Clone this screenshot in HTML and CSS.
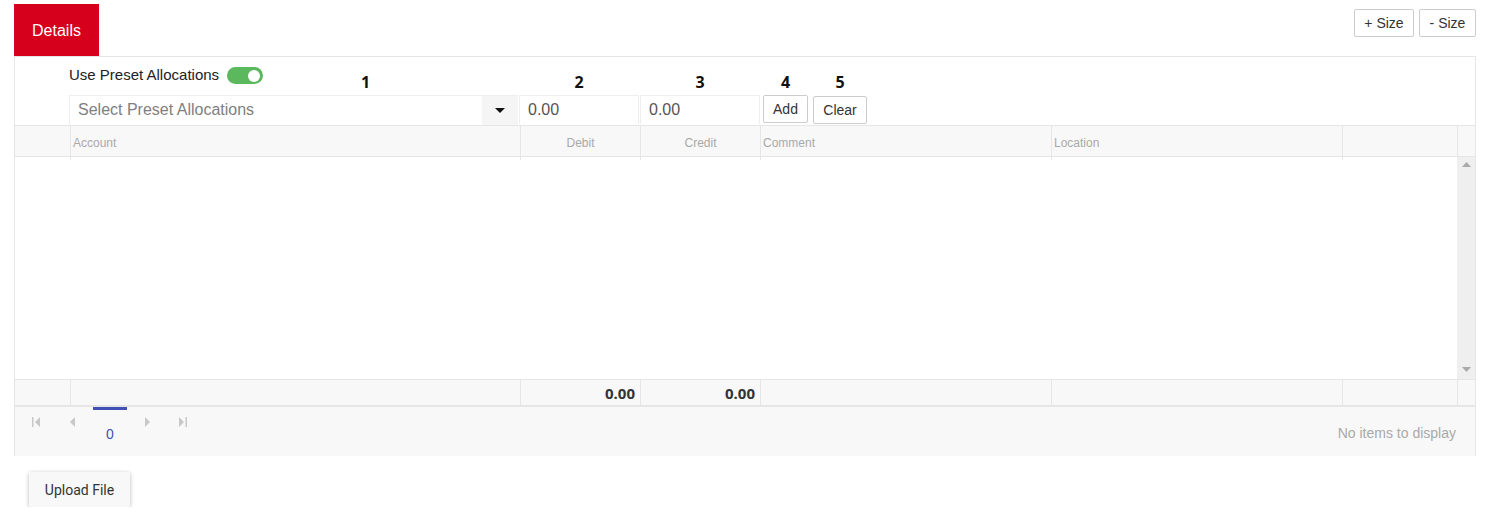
FILE: index.html
```html
<!DOCTYPE html>
<html lang="en">
<head>
  <meta charset="UTF-8" />
  <title>Details - Allocations</title>
  <link rel="stylesheet" href="styles.css">
</head>
<body>
  <div class="alloc-page">
    <div class="alloc-topbar">
      <div class="alloc-tab">Details</div>
      <div class="alloc-size">
        <button class="alloc-btn">+ Size</button>
        <button class="alloc-btn">- Size</button>
      </div>
    </div>

    <div class="alloc-panel">
      <!-- entry controls -->
      <div class="alloc-controls">
        <div class="alloc-preset">
          <span class="alloc-preset-label">Use Preset Allocations</span>
          <span class="alloc-toggle"><span class="alloc-toggle-knob"></span></span>
          <span class="alloc-mark alloc-mark-first">1</span>
        </div>
        <span class="alloc-mark">2</span>
        <span class="alloc-mark">3</span>
        <span class="alloc-mark">4</span>
        <span class="alloc-mark">5</span>

        <div class="alloc-select">
          <span class="alloc-select-text">Select Preset Allocations</span>
          <span class="alloc-select-btn">
            <svg width="10" height="6" viewBox="0 0 10 6"><path d="M0 0h10L5 5z" fill="#111"/></svg>
          </span>
        </div>
        <div class="alloc-input">0.00</div>
        <div class="alloc-input">0.00</div>
        <button class="alloc-btn alloc-btn-add">Add</button>
        <button class="alloc-btn alloc-btn-clear">Clear</button>
      </div>

      <!-- grid -->
      <div class="alloc-row alloc-head">
        <div class="alloc-cell"></div>
        <div class="alloc-cell">Account</div>
        <div class="alloc-cell alloc-center">Debit</div>
        <div class="alloc-cell alloc-center">Credit</div>
        <div class="alloc-cell">Comment</div>
        <div class="alloc-cell">Location</div>
        <div class="alloc-cell"></div>
        <div class="alloc-cell alloc-last"></div>
      </div>

      <div class="alloc-body">
        <div class="alloc-body-content"></div>
        <div class="alloc-scroll">
          <svg width="9" height="5" viewBox="0 0 9 5"><path d="M0 5h9L4.5 0z" fill="#aaa"/></svg>
          <svg width="9" height="5" viewBox="0 0 9 5"><path d="M0 0h9L4.5 5z" fill="#aaa"/></svg>
        </div>
      </div>

      <div class="alloc-row alloc-foot">
        <div class="alloc-cell"></div>
        <div class="alloc-cell"></div>
        <div class="alloc-cell alloc-total">0.00</div>
        <div class="alloc-cell alloc-total">0.00</div>
        <div class="alloc-cell"></div>
        <div class="alloc-cell"></div>
        <div class="alloc-cell"></div>
        <div class="alloc-cell alloc-last"></div>
      </div>

      <div class="alloc-pager">
        <div class="alloc-pager-nav">
          <span class="alloc-pager-icon">
            <svg width="8" height="10" viewBox="0 0 8 10"><path d="M0 0h1.5v10H0z M8 0v10L3 5z" fill="#c8c8c8"/></svg>
          </span>
          <span class="alloc-pager-icon">
            <svg width="5" height="10" viewBox="0 0 5 10"><path d="M5 0v10L0 5z" fill="#c8c8c8"/></svg>
          </span>
          <span class="alloc-pager-num">0</span>
          <span class="alloc-pager-icon">
            <svg width="5" height="10" viewBox="0 0 5 10"><path d="M0 0v10L5 5z" fill="#c8c8c8"/></svg>
          </span>
          <span class="alloc-pager-icon">
            <svg width="8" height="10" viewBox="0 0 8 10"><path d="M0 0v10L5 5z M6.5 0H8v10H6.5z" fill="#c8c8c8"/></svg>
          </span>
        </div>
        <div class="alloc-pager-info">No items to display</div>
      </div>
    </div>

    <button class="alloc-upload">Upload File</button>
  </div>
</body>
</html>
```

FILE: styles.css
```css
:root {
  --alloc-red: #d6001c;
  --alloc-line: #e6e6e6;
  --alloc-soft: #f8f8f8;
  --alloc-muted: #a9a9a9;
  --alloc-text: #333;
}

body {
  margin: 0;
  font-family: "Liberation Sans", Arial, sans-serif;
  color: var(--alloc-text);
  background: #fff;
}

.alloc-page {
  padding: 4px 11px 0 14px;
}

.alloc-topbar {
  display: flex;
  justify-content: space-between;
  align-items: flex-start;
}

.alloc-tab {
  width: 85px;
  height: 52px;
  background: var(--alloc-red);
  color: #fff;
  font-size: 16px;
  line-height: 54px;
  text-align: center;
}

.alloc-size {
  display: flex;
  gap: 5px;
  margin-top: 5px;
}

.alloc-btn {
  height: 28px;
  padding: 0;
  border: 1px solid #ccc;
  border-radius: 2px;
  background: #fff;
  color: var(--alloc-text);
  font-family: inherit;
  font-size: 14px;
  white-space: nowrap;
  cursor: pointer;
}

.alloc-size .alloc-btn:first-child {
  width: 60px;
}

.alloc-size .alloc-btn:last-child {
  width: 57px;
}

.alloc-panel {
  border: 1px solid var(--alloc-line);
  border-bottom: none;
}

/* entry controls */
.alloc-controls {
  display: grid;
  grid-template-columns: 449px 1px 120px 1px 120px 3px 45px 5px 54px;
  grid-template-rows: 38px 30px;
  padding-left: 54px;
}

.alloc-controls > :nth-child(1) { grid-column: 1; grid-row: 1; }
.alloc-controls > :nth-child(2) { grid-column: 3; grid-row: 1; }
.alloc-controls > :nth-child(3) { grid-column: 5; grid-row: 1; }
.alloc-controls > :nth-child(4) { grid-column: 7; grid-row: 1; }
.alloc-controls > :nth-child(5) { grid-column: 9; grid-row: 1; }
.alloc-controls > :nth-child(6) { grid-column: 1; grid-row: 2; }
.alloc-controls > :nth-child(7) { grid-column: 3; grid-row: 2; }
.alloc-controls > :nth-child(8) { grid-column: 5; grid-row: 2; }
.alloc-controls > :nth-child(9) { grid-column: 7; grid-row: 2; }
.alloc-controls > :nth-child(10) { grid-column: 9; grid-row: 2; }

.alloc-preset {
  display: flex;
  align-items: flex-start;
  padding-top: 9px;
}

.alloc-preset-label {
  font-size: 15px;
  line-height: 18px;
  color: #222;
}

.alloc-toggle {
  width: 36px;
  height: 17px;
  margin-left: 8px;
  margin-top: 1px;
  border-radius: 9px;
  background: #5cb85c;
  display: flex;
  align-items: center;
  justify-content: flex-end;
  padding-right: 3px;
  box-sizing: border-box;
}

.alloc-toggle-knob {
  width: 12px;
  height: 12px;
  border-radius: 50%;
  background: #fff;
}

.alloc-mark {
  align-self: end;
  text-align: center;
  font-family: "Open Sans", sans-serif;
  font-weight: 700;
  font-size: 16px;
  line-height: 20px;
  padding-bottom: 3px;
  color: #111;
}

.alloc-mark-first {
  margin-left: 98px;
}

.alloc-select {
  display: flex;
  border-top: 1px solid #eee;
  border-left: 1px solid #eee;
  height: 29px;
}

.alloc-select-text {
  flex: 1;
  padding-left: 8px;
  font-size: 16px;
  line-height: 28px;
  color: #808080;
}

.alloc-select-btn {
  width: 36px;
  background: #f5f5f5;
  display: flex;
  align-items: center;
  justify-content: center;
}

.alloc-input {
  border: 1px solid #eee;
  border-bottom: none;
  padding-left: 8px;
  font-size: 16px;
  line-height: 27px;
  height: 29px;
  box-sizing: border-box;
  color: #555;
}

.alloc-btn-clear {
  margin-top: 1px;
}

/* grid */
.alloc-row {
  display: grid;
  grid-template-columns: 56px 450px 120px 120px 291px 291px 115px 1fr;
  background: var(--alloc-soft);
  border-top: 1px solid var(--alloc-line);
}

.alloc-cell {
  border-right: 1px solid var(--alloc-line);
  padding: 0 3px;
}

.alloc-cell.alloc-last {
  border-right: none;
}

.alloc-head {
  height: 32px;
  border-bottom: 1px solid var(--alloc-line);
  box-sizing: border-box;
}

.alloc-head .alloc-cell {
  font-size: 12px;
  line-height: 34px;
  color: var(--alloc-muted);
  padding-left: 2px;
}

.alloc-center {
  text-align: center;
}

.alloc-head .alloc-center {
  padding: 0;
}

.alloc-body {
  display: flex;
  height: 222px;
}

.alloc-body-content {
  flex: 1;
}

.alloc-scroll {
  width: 18px;
  background: #efefef;
  display: flex;
  flex-direction: column;
  justify-content: space-between;
  align-items: center;
  padding: 5px 0 7px;
  box-sizing: border-box;
}

.alloc-foot {
  height: 28px;
  border-bottom: 2px solid var(--alloc-line);
  box-sizing: border-box;
}

.alloc-total {
  text-align: right;
  padding-right: 5px;
  font-family: "Open Sans", sans-serif;
  font-weight: 700;
  font-size: 15px;
  line-height: 26px;
  color: #333;
}

.alloc-pager {
  height: 49px;
  background: var(--alloc-soft);
  display: flex;
  justify-content: space-between;
  padding: 0 19px 0 3px;
}

.alloc-pager-nav {
  display: flex;
  align-items: flex-start;
}

.alloc-pager-icon {
  width: 36px;
  display: flex;
  justify-content: center;
  padding-top: 10px;
}

.alloc-pager-num {
  width: 34px;
  border-top: 3px solid #3f51b5;
  margin: 0 2px 0 3px;
  text-align: center;
  font-size: 14px;
  padding-top: 16px;
  color: #3f51b5;
}

.alloc-pager-info {
  align-self: center;
  padding-top: 2px;
  font-size: 14px;
  color: var(--alloc-muted);
}

.alloc-upload {
  margin: 16px 0 0 15px;
  width: 101px;
  height: 35px;
  border: none;
  border-radius: 2px;
  background: var(--alloc-soft);
  box-shadow: 0 1px 4px rgba(0, 0, 0, 0.28);
  color: var(--alloc-text);
  font-family: "Roboto", "Liberation Sans", sans-serif;
  font-size: 14px;
  cursor: pointer;
}
```
